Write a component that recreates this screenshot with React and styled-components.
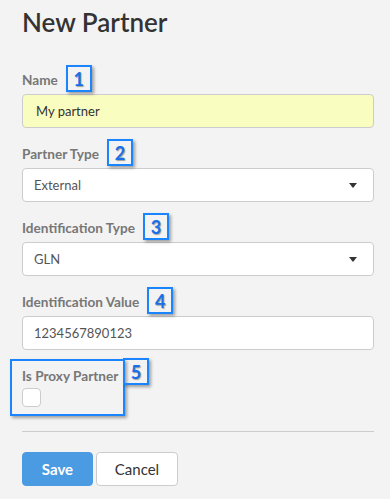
import React from "react";
import styled, { createGlobalStyle } from "styled-components";

const GlobalStyle = createGlobalStyle`
  body {
    margin: 0;
    background: #f3f3f3;
    font-family: "Source Sans Pro", Lato, "Noto Sans", sans-serif;
  }
`;

const Page = styled.div`
  width: 390px;
  height: 499px;
  box-sizing: border-box;
  padding: 7px 16px 0 22px;
  background: #f3f3f3;
`;

const Title = styled.h2`
  margin: 0;
  font-size: 26px;
  line-height: 30px;
  font-weight: 600;
  color: #333;
`;

const Form = styled.form`
  margin-top: 33px;
  display: flex;
  flex-direction: column;
`;

const Field = styled.div`
  display: flex;
  flex-direction: column;
  margin-bottom: 16px;
`;

const Label = styled.label`
  position: relative;
  align-self: flex-start;
  font-size: 13.6px;
  line-height: 20px;
  font-weight: 700;
  color: #777;
  margin-bottom: ${props => props.tight ? "2px" : "4px"};
`;

const Badge = styled.span`
  position: absolute;
  left: ${props => props.flush ? "100%" : "calc(100% + 8px)"};
  top: ${props => props.top || -5}px;
  width: 22px;
  height: 23px;
  border: 2px solid #1a85ff;
  box-shadow: 2px 2px 3px rgba(0, 0, 0, 0.35);
  display: flex;
  align-items: center;
  justify-content: center;
  font-size: 18px;
  font-weight: 700;
  color: #1a6fe8;
  text-shadow: 1px 1px 1px rgba(0, 0, 0, 0.35);
`;

const Input = styled.div`
  height: 34px;
  box-sizing: border-box;
  border: 1px solid #ccc;
  border-radius: 4px;
  background: ${props => props.filled ? "#fafdc0" : "#fff"};
  padding: 0 12px 0 ${props => props.filled ? 13 : 11}px;
  display: flex;
  align-items: center;
  justify-content: space-between;
  font-size: 13px;
  color: ${props => props.filled ? "#333" : "#555"};
`;

const Caret = styled.span`
  width: 0;
  height: 0;
  margin-right: 4px;
  border-left: 4.5px solid transparent;
  border-right: 4.5px solid transparent;
  border-top: 5px solid #333;
`;

const ProxyGroup = styled.div`
  position: relative;
  align-self: flex-start;
  display: flex;
  flex-direction: column;
  margin-bottom: 24px;
`;

const Outline = styled.span`
  position: absolute;
  left: -12px;
  top: -7px;
  width: 111px;
  height: 53px;
  border: 2px solid #1a85ff;
  box-shadow: 2px 2px 3px rgba(0, 0, 0, 0.35);
`;

const Checkbox = styled.span`
  width: 19px;
  height: 19px;
  box-sizing: border-box;
  border: 1px solid #ccc;
  border-radius: 4px;
  background: #fff;
`;

const Divider = styled.hr`
  margin: 0;
  border: 0;
  border-top: 1px solid #ccc;
`;

const Actions = styled.div`
  display: flex;
  gap: 3px;
  margin-top: 20px;
`;

const Button = styled.button`
  height: 34px;
  box-sizing: border-box;
  padding: 0;
  width: ${props => props.primary ? 71 : 82}px;
  border-radius: 4px;
  border: 1px solid ${props => props.primary ? "#4a9be2" : "#ccc"};
  background: ${props => props.primary ? "#4a9be2" : "#fff"};
  color: ${props => props.primary ? "#fff" : "#333"};
  font-family: inherit;
  font-size: 15px;
  font-weight: ${props => props.primary ? 700 : 400};
`;

const fields = [
  { label: "Name", value: "My partner", filled: true, n: 1 },
  { label: "Partner Type", value: "External", select: true, n: 2 },
  { label: "Identification Type", value: "GLN", select: true, n: 3 },
  { label: "Identification Value", value: "1234567890123", n: 4 },
];

export default function App() {
  return (
    <Page>
      <GlobalStyle />
      <Title>New Partner</Title>
      <Form>
        {fields.map(f => (
          <Field key={f.n}>
            <Label>
              {f.label}
              <Badge>{f.n}</Badge>
            </Label>
            <Input filled={f.filled}>
              {f.value}
              {f.select && <Caret />}
            </Input>
          </Field>
        ))}
        <ProxyGroup>
          <Outline>
            <Badge flush top={-3}>5</Badge>
          </Outline>
          <Label tight>Is Proxy Partner</Label>
          <Checkbox />
        </ProxyGroup>
        <Divider />
        <Actions>
          <Button type="button" primary>Save</Button>
          <Button type="button">Cancel</Button>
        </Actions>
      </Form>
    </Page>
  );
}
